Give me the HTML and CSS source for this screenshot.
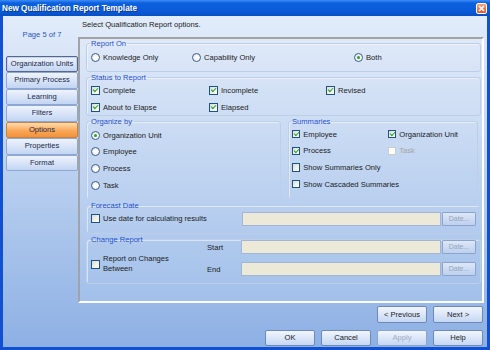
FILE: index.html
```html
<!DOCTYPE html>
<html lang="en">
<head>
  <meta charset="UTF-8">
  <meta name="viewport" content="width=device-width, initial-scale=1.0">
  <title>New Qualification Report Template</title>
  <link rel="stylesheet" href="styles.css">
</head>
<body>
  <div class="window">
    <div class="titlebar">
      <span class="title">New Qualification Report Template</span>
      <span class="close-btn">
        <svg width="7" height="7" viewBox="0 0 7 7"><path d="M1 1 L6 6 M6 1 L1 6" stroke="#fff" stroke-width="1.6"/></svg>
      </span>
    </div>
    <div class="client">
      <div class="main">
        <div class="sidebar">
          <div class="page-no">Page 5 of 7</div>
          <div class="nav">
            <div class="nav-btn focused">Organization Units</div>
            <div class="nav-btn">Primary Process</div>
            <div class="nav-btn">Learning</div>
            <div class="nav-btn">Filters</div>
            <div class="nav-btn active">Options</div>
            <div class="nav-btn">Properties</div>
            <div class="nav-btn">Format</div>
          </div>
        </div>
        <div class="content">
          <div class="intro">Select Qualification Report options.</div>
          <div class="panel">
            <fieldset class="group report-on">
              <legend>Report On</legend>
              <div class="report-row">
                <label class="opt"><span class="rad"></span>Knowledge Only</label>
                <label class="opt"><span class="rad"></span>Capability Only</label>
                <label class="opt"><span class="rad on"></span>Both</label>
              </div>
            </fieldset>

            <fieldset class="group status">
              <legend>Status to Report</legend>
              <div class="status-grid">
                <label class="opt"><span class="chk on"></span>Complete</label>
                <label class="opt"><span class="chk on"></span>Incomplete</label>
                <label class="opt"><span class="chk on"></span>Revised</label>
                <label class="opt"><span class="chk on"></span>About to Elapse</label>
                <label class="opt"><span class="chk on"></span>Elapsed</label>
              </div>
            </fieldset>

            <div class="middle">
              <fieldset class="group organize">
                <legend>Organize by</legend>
                <label class="opt line"><span class="rad on"></span>Organization Unit</label>
                <label class="opt line"><span class="rad"></span>Employee</label>
                <label class="opt line"><span class="rad"></span>Process</label>
                <label class="opt line"><span class="rad"></span>Task</label>
              </fieldset>
              <fieldset class="group summaries">
                <legend>Summaries</legend>
                <div class="sum-grid">
                  <label class="opt line"><span class="chk small on"></span>Employee</label>
                  <label class="opt line"><span class="chk small on"></span>Organization Unit</label>
                  <label class="opt line"><span class="chk small on"></span>Process</label>
                  <label class="opt line disabled"><span class="chk small off"></span>Task</label>
                  <label class="opt line wide"><span class="chk small"></span>Show Summaries Only</label>
                  <label class="opt line wide"><span class="chk small"></span>Show Cascaded Summaries</label>
                </div>
              </fieldset>
            </div>

            <fieldset class="group forecast">
              <legend>Forecast Date</legend>
              <div class="forecast-row">
                <label class="opt forecast-opt"><span class="chk"></span>Use date for calculating results</label>
                <span class="field"></span>
                <span class="date-btn">Date...</span>
              </div>
            </fieldset>

            <fieldset class="group change">
              <legend>Change Report</legend>
              <div class="change-body">
                <label class="opt change-opt"><span class="chk"></span><span>Report on Changes<br>Between</span></label>
                <div class="change-fields">
                  <span class="field-label">Start</span>
                  <span class="field"></span>
                  <span class="date-btn">Date...</span>
                  <span class="field-label">End</span>
                  <span class="field"></span>
                  <span class="date-btn">Date...</span>
                </div>
              </div>
            </fieldset>
          </div>
        </div>
      </div>
      <div class="footer">
        <div class="btn-row">
          <button class="btn">&lt; Previous</button>
          <button class="btn">Next &gt;</button>
        </div>
        <div class="btn-row">
          <button class="btn">OK</button>
          <button class="btn">Cancel</button>
          <button class="btn" disabled>Apply</button>
          <button class="btn">Help</button>
        </div>
      </div>
    </div>
  </div>
</body>
</html>
```

FILE: styles.css
```css
body {
  margin: 0;
  padding: 0;
  font-family: "Liberation Sans", Arial, sans-serif;
  font-size: 7.6px;
  color: #1b1b1b;
}
.window {
  width: 490px;
  height: 350px;
  background: #1150d0;
  display: flex;
  flex-direction: column;
}
.titlebar {
  height: 16px;
  display: flex;
  align-items: center;
  justify-content: space-between;
  padding: 0 3px 0 2px;
  background: linear-gradient(#3f8cf6 0, #0c60de 3px, #0a5ad8 70%, #084fc6 100%);
}
.title {
  color: #fff;
  font-weight: bold;
  font-size: 8.2px;
  text-shadow: 1px 1px 0 #0a3590;
}
.close-btn {
  width: 11px;
  height: 11px;
  box-sizing: border-box;
  border: 1px solid #fff;
  border-radius: 2px;
  background: linear-gradient(#f4a284, #df5430);
  display: flex;
  align-items: center;
  justify-content: center;
}
.client {
  flex: 1;
  margin: 0 3px 3px 3px;
  background: linear-gradient(#e2ecfa, #8db0e4);
  display: flex;
  flex-direction: column;
}
.main {
  display: flex;
  height: 287px;
}
.sidebar {
  width: 75px;
  padding-left: 3px;
  box-sizing: border-box;
}
.page-no {
  color: #2a56c6;
  text-align: center;
  line-height: 9px;
  padding-top: 13.5px;
  height: 39.5px;
  box-sizing: border-box;
}
.nav-btn {
  height: 16.5px;
  box-sizing: border-box;
  border: 1px solid #8fa8d2;
  border-radius: 2px;
  background: linear-gradient(#eef3fd, #c3d5f2);
  text-align: center;
  line-height: 14.5px;
  color: #1c2a48;
}
.nav-btn.focused {
  border-color: #56688c;
  box-shadow: inset 0 0 0 1px #c4d3ee;
}
.nav-btn.active {
  border-color: #c3834a;
  background: linear-gradient(#ffdcae, #f9a757 55%, #f2923a);
}
.content {
  width: 406px;
}
.intro {
  height: 21px;
  box-sizing: border-box;
  padding: 4px 0 0 4px;
  line-height: 10px;
}
.panel {
  height: 266px;
  box-sizing: border-box;
  border: 2px solid;
  border-color: #a3a3a3 #fff #fff #a3a3a3;
  background: linear-gradient(#dfe9f8, #a2c0ea);
  padding: 0 1px 0 6px;
  display: flex;
  flex-direction: column;
  gap: 1px;
}
.group {
  margin: 0;
  padding: 0 4px;
  min-width: 0;
  border: 1px solid #bdcee9;
  border-radius: 3px;
  box-shadow: inset 1px 1px 0 rgba(255, 255, 255, 0.5);
}
.group legend {
  padding: 0 1px;
  margin-left: -1px;
  line-height: 9px;
  color: #1f4fcf;
}
.opt {
  display: flex;
  align-items: center;
  gap: 3px;
  white-space: nowrap;
}
.rad {
  width: 9px;
  height: 9px;
  box-sizing: border-box;
  border-radius: 50%;
  border: 1px solid #3e5f8e;
  background: radial-gradient(circle at 60% 60%, #fff 30%, #d6d6cf 100%);
  display: flex;
  align-items: center;
  justify-content: center;
  flex: none;
}
.rad.on::after {
  content: "";
  width: 3.5px;
  height: 3.5px;
  border-radius: 50%;
  background: #2aa82a;
  box-shadow: 0 0 1px #9fe39f;
}
.chk {
  width: 9px;
  height: 9px;
  box-sizing: border-box;
  border: 1px solid #1d5281;
  background: linear-gradient(135deg, #dcdcd5, #fff);
  display: flex;
  align-items: center;
  justify-content: center;
  flex: none;
}
.chk.small {
  width: 8.3px;
  height: 8.3px;
}
.chk.off {
  border-color: #cfcdc0;
  background: #fff;
}
.chk.on::after {
  content: "";
  width: 3.6px;
  height: 1.6px;
  margin-top: -1.5px;
  border-left: 1.6px solid #21a121;
  border-bottom: 1.6px solid #21a121;
  transform: rotate(-45deg);
}
.disabled {
  color: #a3a3a3;
}
.report-row {
  display: grid;
  grid-template-columns: 101px 162px auto;
  height: 15px;
  margin: 2px 0 6px;
}
.status-grid {
  display: grid;
  grid-template-columns: 118px 117px auto;
  grid-auto-rows: 16px;
  row-gap: 1px;
}
.middle {
  display: flex;
  gap: 7px;
  height: 83px;
}
.organize {
  width: 195px;
  box-sizing: border-box;
  padding-top: 1px;
}
.summaries {
  width: 190px;
  box-sizing: border-box;
  padding-left: 3px;
}
.line {
  height: 16.67px;
}
.sum-grid {
  display: grid;
  grid-template-columns: 96px auto;
}
.sum-grid .wide {
  grid-column: 1 / 3;
}
.forecast-row {
  display: flex;
  align-items: center;
  height: 17px;
  margin-bottom: 6px;
}
.forecast-opt {
  width: 152px;
}
.field {
  width: 200px;
  height: 14px;
  box-sizing: border-box;
  background: #ece9d8;
  border: 1px solid #a3b5d3;
}
.date-btn {
  width: 34px;
  height: 14px;
  margin-left: 1px;
  box-sizing: border-box;
  border: 1px solid #8ca4cb;
  border-radius: 1px;
  background: linear-gradient(#dde7f7, #bdd0ee);
  color: #97a5bc;
  font-size: 7px;
  line-height: 12px;
  text-align: center;
}
.change-body {
  display: flex;
  margin: -4px 0 7px;
}
.change-opt {
  width: 118px;
  height: 20px;
  margin-top: 14px;
  line-height: 9.7px;
}
.change-fields {
  display: grid;
  grid-template-columns: 34px 200px 35px;
  grid-auto-rows: 14px;
  row-gap: 8px;
  align-items: center;
}
.footer {
  display: flex;
  flex-direction: column;
  align-items: flex-end;
  padding: 3px 4px 0 0;
  gap: 7px;
}
.btn-row {
  display: flex;
  gap: 6px;
}
.btn {
  width: 50px;
  height: 16.5px;
  padding: 0;
  box-sizing: border-box;
  border: 1px solid #6f88b6;
  border-radius: 2px;
  background: linear-gradient(#f1f6fe, #c5d7f3);
  font-family: "Liberation Sans", Arial, sans-serif;
  font-size: 7.6px;
  color: #1b1b1b;
}
.btn:disabled {
  color: #a2acbf;
  border-color: #8ea3c8;
}
```
